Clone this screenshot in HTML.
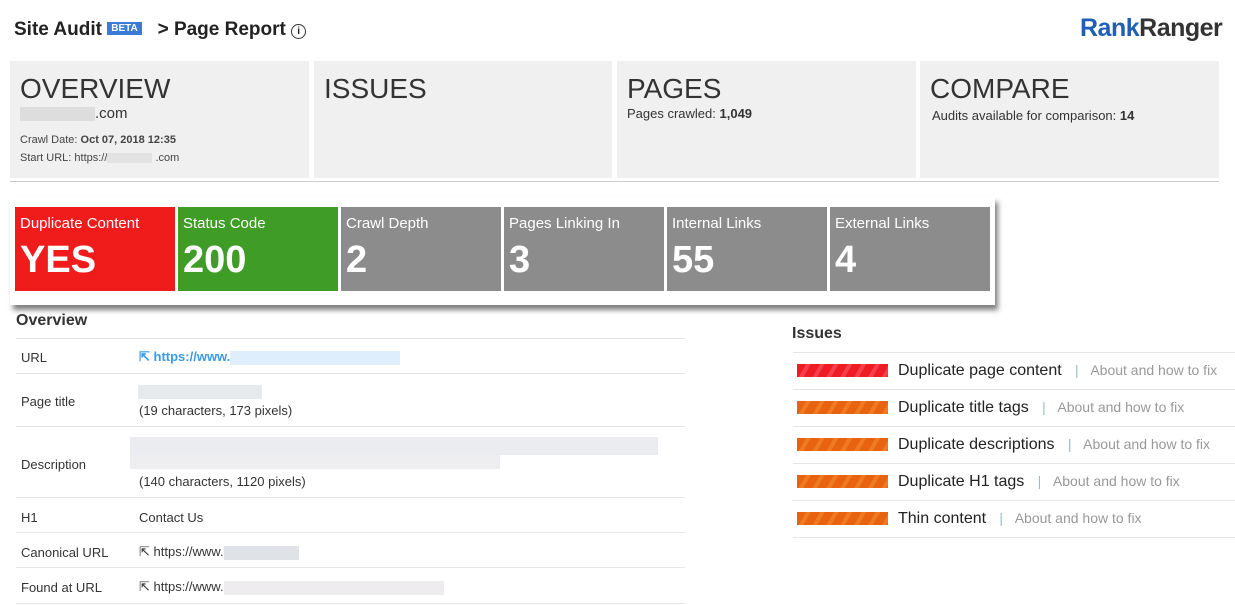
<!DOCTYPE html><html><head><style>
body{margin:0;width:1235px;height:605px;background:#fff;font-family:"Liberation Sans",sans-serif;position:relative;overflow:hidden;color:#333}
.a{position:absolute}
.top{background:#f0f0f0;top:61px;height:117px}
.top h2{margin:0;position:absolute;left:10px;top:12px;font-weight:normal;font-size:28px;color:#333;letter-spacing:0}
.sm{font-size:11px;color:#444}
.m{top:207px;height:84px;width:160px;color:#fff;background:#8c8c8c}
.m .l{position:absolute;left:5px;top:8px;font-size:15px}
.m .v{position:absolute;left:5px;top:32px;font-size:38px;font-weight:bold}
.blur{display:inline-block;height:14px;vertical-align:middle}
.row{left:16px;width:669px;border-top:1px solid #e6e6e6;font-size:13px}
.lab{position:absolute;left:5px}
.val{position:absolute;left:123px}
.iss{left:793px;width:442px;border-top:1px solid #e6e6e6;height:36px;font-size:16px}
.bar{position:absolute;left:4px;top:11px;width:91px;height:13px;background:repeating-linear-gradient(120deg,#e8630f 0 8px,#f07a22 8px 12px)}
.it{position:absolute;left:105px;top:9px;color:#222;white-space:nowrap}
.it span{color:#999;font-size:14px}
</style></head><body>
<div class="a" style="left:14px;top:19px;font-size:19px;font-weight:bold;color:#222">Site Audit <span style="background:#3a7bd5;color:#fff;font-size:10px;padding:1px 4px;vertical-align:4px">BETA</span> &nbsp;&nbsp;&gt; Page Report <span style="display:inline-block;width:13px;height:13px;border:1.5px solid #333;border-radius:50%;font-size:10px;text-align:center;line-height:13px;vertical-align:1px">i</span></div>
<div class="a" style="left:1080px;top:14px;font-size:25px;font-weight:bold;letter-spacing:-0.5px"><span style="color:#1f5fb5">Rank</span><span style="color:#333">Ranger</span></div>
<div class="a top" style="left:10px;width:299px"><h2>OVERVIEW</h2>
<div class="a" style="left:10px;top:44px;font-size:15px"><span class="blur" style="width:75px;background:#ddd"></span>.com</div>
<div class="a sm" style="left:10px;top:73px">Crawl Date: <b>Oct 07, 2018 12:35</b></div>
<div class="a sm" style="left:10px;top:91px">Start URL: https://<span class="blur" style="width:45px;height:10px;background:#e2e2e2"></span> .com</div></div>
<div class="a top" style="left:314px;width:298px"><h2>ISSUES</h2></div>
<div class="a top" style="left:617px;width:299px"><h2>PAGES</h2><div class="a" style="left:10px;top:45px;font-size:13px">Pages crawled: <b>1,049</b></div></div>
<div class="a top" style="left:920px;width:299px"><h2>COMPARE</h2><div class="a" style="left:12px;top:47px;font-size:13px">Audits available for comparison: <b>14</b></div></div>
<div class="a" style="left:10px;top:181px;width:1209px;height:1px;background:#ccc"></div>
<div class="a" style="left:10px;top:197px;width:985px;height:108px;background:#fff;box-shadow:3px 5px 5px rgba(0,0,0,.5)"></div>
<div class="a m" style="left:15px;background:#f01c1c"><div class="l">Duplicate Content</div><div class="v">YES</div></div>
<div class="a m" style="left:178px;background:#3f9c26"><div class="l">Status Code</div><div class="v">200</div></div>
<div class="a m" style="left:341px"><div class="l">Crawl Depth</div><div class="v">2</div></div>
<div class="a m" style="left:504px"><div class="l">Pages Linking In</div><div class="v">3</div></div>
<div class="a m" style="left:667px"><div class="l">Internal Links</div><div class="v">55</div></div>
<div class="a m" style="left:830px"><div class="l">External Links</div><div class="v">4</div></div>
<div class="a" style="left:16px;top:312px;font-size:16px;font-weight:bold;color:#333">Overview</div>
<div class="a row" style="top:338px;height:35px"><span class="lab" style="top:11px">URL</span><span class="val" style="top:10px;color:#3a9ae8;font-weight:bold">⇱ https://www.<span class="blur" style="width:170px;background:#dfeefc"></span></span></div>
<div class="a row" style="top:373px;height:53px"><span class="lab" style="top:20px">Page title</span><span class="blur a" style="left:122px;top:11px;width:124px;background:#e6e9ec"></span><span class="val" style="top:29px">(19 characters, 173 pixels)</span></div>
<div class="a row" style="top:426px;height:71px"><span class="lab" style="top:30px">Description</span><span class="a" style="left:114px;top:10px;width:528px;height:18px;background:#ebecef"></span><span class="a" style="left:114px;top:28px;width:370px;height:14px;background:#eeeef0"></span><span class="val" style="top:47px">(140 characters, 1120 pixels)</span></div>
<div class="a row" style="top:497px;height:35px"><span class="lab" style="top:12px">H1</span><span class="val" style="top:12px">Contact Us</span></div>
<div class="a row" style="top:532px;height:35px"><span class="lab" style="top:12px">Canonical URL</span><span class="val" style="top:11px">⇱ https://www.<span class="blur" style="width:75px;background:#dfe3e7"></span></span></div>
<div class="a row" style="top:567px;height:35px;border-bottom:1px solid #e6e6e6"><span class="lab" style="top:12px">Found at URL</span><span class="val" style="top:11px">⇱ https://www.<span class="blur" style="width:220px;background:#eeecef"></span></span></div>
<div class="a" style="left:792px;top:325px;font-size:16px;font-weight:bold;color:#333">Issues</div>
<div class="a iss" style="top:352px"><div class="bar" style="background:repeating-linear-gradient(120deg,#ee1c24 0 8px,#f5404a 8px 12px)"></div><div class="it">Duplicate page content &nbsp;&nbsp;<span><span style="color:#9bc">|</span> &nbsp;&nbsp;About and how to fix</span></div></div>
<div class="a iss" style="top:389px"><div class="bar"></div><div class="it">Duplicate title tags &nbsp;&nbsp;<span><span style="color:#9bc">|</span> &nbsp;&nbsp;About and how to fix</span></div></div>
<div class="a iss" style="top:426px"><div class="bar"></div><div class="it">Duplicate descriptions &nbsp;&nbsp;<span><span style="color:#9bc">|</span> &nbsp;&nbsp;About and how to fix</span></div></div>
<div class="a iss" style="top:463px"><div class="bar"></div><div class="it">Duplicate H1 tags &nbsp;&nbsp;<span><span style="color:#9bc">|</span> &nbsp;&nbsp;About and how to fix</span></div></div>
<div class="a iss" style="top:500px;border-bottom:1px solid #e6e6e6"><div class="bar"></div><div class="it">Thin content &nbsp;&nbsp;<span><span style="color:#9bc">|</span> &nbsp;&nbsp;About and how to fix</span></div></div>
</body></html>
